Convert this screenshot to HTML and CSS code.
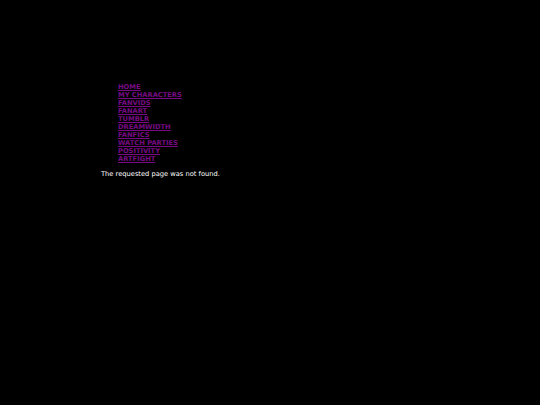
FILE: index.html
```html
<!DOCTYPE html>
<html>
<head>
<meta charset="utf-8">
<link rel="stylesheet" href="styles.css">
</head>
<body>
<div class="page">
  <ul class="nav">
    <li><a href="#">HOME</a></li>
    <li><a href="#">MY CHARACTERS</a></li>
    <li><a href="#">FANVIDS</a></li>
    <li><a href="#">FANART</a></li>
    <li><a href="#">TUMBLR</a></li>
    <li><a href="#">DREAMWIDTH</a></li>
    <li><a href="#">FANFICS</a></li>
    <li><a href="#">WATCH PARTIES</a></li>
    <li><a href="#">POSITIVITY</a></li>
    <li><a href="#">ARTFIGHT</a></li>
  </ul>
  <p class="msg">The requested page was not found.</p>
</div>
</body>
</html>
```
FILE: styles.css
```css
html, body {
  margin: 0;
  padding: 0;
  background: #000;
  height: 100%;
}
body {
  font-family: "DejaVu Sans", Verdana, sans-serif;
}
.page {
  padding: 83px 0 0 101px;
}
.nav {
  list-style: none;
  margin: 0;
  padding: 0 0 0 17px;
}
.nav li {
  font-size: 6.7px;
  line-height: 8px;
  font-weight: bold;
}
.nav a {
  color: #780a84;
  text-decoration: underline;
}
.msg {
  margin: 7px 0 0 0;
  color: #fff;
  font-size: 6.7px;
  line-height: 9px;
}
```
